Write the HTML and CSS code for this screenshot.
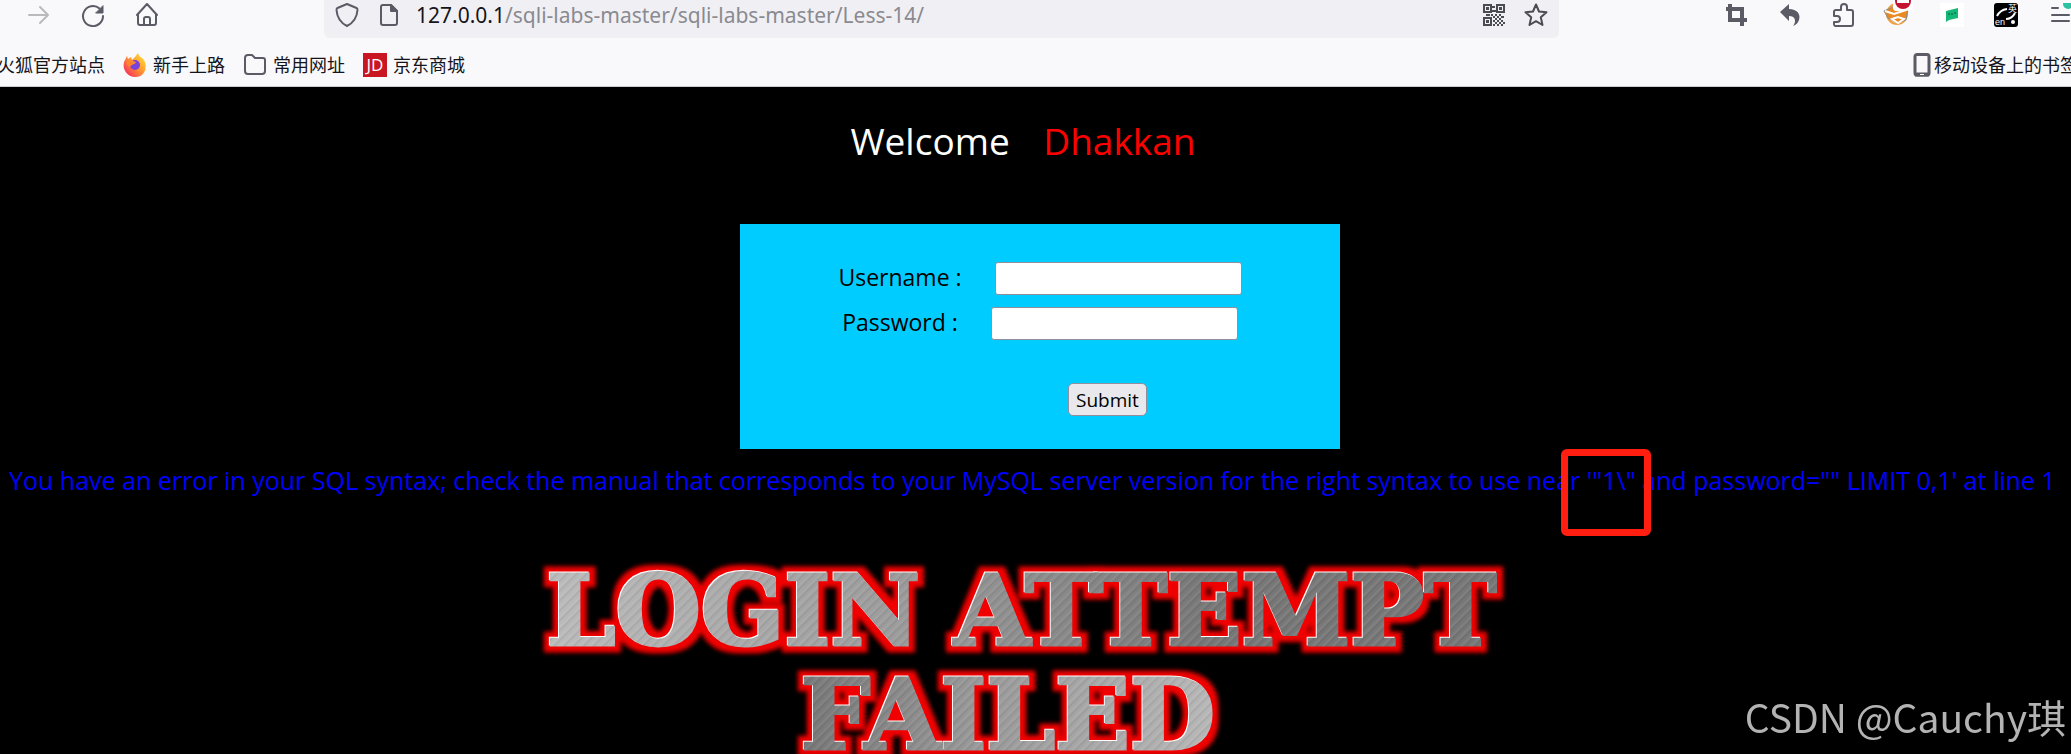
FILE: index.html
```html
<!DOCTYPE html>
<html lang="zh-CN">
<head>
    <meta charset="UTF-8">
    <meta name="viewport" content="width=device-width, initial-scale=1.0">
    <title>Less-14</title>
    <link rel="stylesheet" href="styles.css">
</head>
<body>
    <header class="browser">
        <div class="toolbar">
            <div class="nav-buttons">
                <button class="icon-button" aria-label="Forward" disabled>
                    <svg width="24" height="24" viewBox="0 0 24 24" fill="none" stroke="#b9b9be" stroke-width="2" stroke-linecap="round" stroke-linejoin="round"><path d="M2 12h19M13 4l8 8-8 8"/></svg>
                </button>
                <button class="icon-button" aria-label="Reload">
                    <svg width="24" height="24" viewBox="0 0 24 24" fill="none" stroke="#5b5b66" stroke-width="2" stroke-linecap="round"><path d="M18.500 5.500A10 10 0 1 0 22 13"/><path d="M22 3v7h-7z" fill="#5b5b66" stroke-width="1" stroke-linejoin="round"/></svg>
                </button>
                <button class="icon-button" aria-label="Home">
                    <svg width="24" height="24" viewBox="0 0 24 24" fill="none" stroke="#5b5b66" stroke-width="2" stroke-linecap="round" stroke-linejoin="round"><path d="M2 12 12 1l10 11M3 11v9a2 2 0 0 0 2 2h14a2 2 0 0 0 2-2v-9M9 22v-6a2 2 0 0 1 2-2h2a2 2 0 0 1 2 2v6"/></svg>
                </button>
            </div>

            <div class="url-bar">
                <svg width="24" height="24" viewBox="0 0 24 24" fill="none" stroke="#5b5b66" stroke-width="2" stroke-linejoin="round"><path d="M12 1 21.500 5c1 .4 1 1 1 2-.5 7-3.500 12.500-10.500 16C5 19.500 2 14 1.500 7c0-1 0-1.600 1-2z"/></svg>
                <svg class="page-icon" width="20" height="24" viewBox="0 0 20 24" fill="none" stroke="#5b5b66" stroke-width="2" stroke-linejoin="round"><path d="M4 2h8l6 6v12a2 2 0 0 1-2 2H4a2 2 0 0 1-2-2V4a2 2 0 0 1 2-2z"/><path d="M12 2v6h6z" fill="#5b5b66"/></svg>
                <span class="url"><span class="host">127.0.0.1</span>/sqli-labs-master/sqli-labs-master/Less-14/</span>
                <svg width="22" height="22" viewBox="0 0 22 22" fill="none" stroke="#4b4b52" stroke-width="2"><path d="M1 1h7v7H1zM14 1h7v7h-7zM1 14h7v7H1z"/><path d="M3 4.500h3M16 4.500h3M3 17.500h3" stroke-width="3"/><path d="M9 3h3M9 7h4M3 11h4M8 11h2M12 11h2M16 11h2M10 13h2M14 13h2M18 13h3M12 15h2M16 15h2M10 17h2M14 17h2M18 17h2M12 19h2M16 19h2M20 19h2M10 21h2M14 21h2M18 21h2"/></svg>
                <svg class="star-icon" width="24" height="24" viewBox="0 0 24 24" fill="none" stroke="#4b4b52" stroke-width="2" stroke-linejoin="round"><path d="M12 1.500 15 8.500l7.500.7-5.700 5.100 1.700 7.700L12 18.200 5.500 22l1.700-7.700L1.500 9.200 9 8.500z"/></svg>
            </div>

            <div class="extensions">
                <button class="icon-button" aria-label="Screenshot">
                    <svg width="24" height="24" viewBox="0 0 24 24" fill="none" stroke="#5b5b66" stroke-width="4"><path d="M2 6h16v17M6 1v16h17"/></svg>
                </button>
                <button class="icon-button" aria-label="Undo">
                    <svg width="24" height="24" viewBox="0 0 24 24" fill="#5b5b66"><path d="M2 9 11 1v5c8 0 12 5 10 11-1 3-3 5-6 6 4-5 2-10-4-10v5z"/></svg>
                </button>
                <button class="icon-button" aria-label="Extensions">
                    <svg width="24" height="26" viewBox="0 0 24 26" fill="none" stroke="#5b5b66" stroke-width="2" stroke-linejoin="round"><path d="M3 24h16a2 2 0 0 0 2-2V10a2 2 0 0 0-2-2h-4V5a3 3 0 0 0-6 0v3H4a2 2 0 0 0-2 2v4h3a3 3 0 0 1 0 6H2v2a2 2 0 0 0 1 2z"/></svg>
                </button>
                <button class="icon-button proxy" aria-label="Proxy switcher">
                    <svg width="30" height="26" viewBox="0 0 30 26" overflow="visible"><circle cx="14" cy="12" r="10" fill="#ffd9a0" stroke="#f0a040" stroke-width="2"/><path d="M1 9l9-4 15 2-2 11-9 3-9-5z" fill="#e98a22" stroke="#8b8b8b"/><path d="M2 9l9 3 12-4M9 17l6-2 6 2-6 4z" fill="none" stroke="#fff" stroke-width="2"/><path d="M10-2h20V8l-8 1H12l-2-2z" fill="#fff"/><circle cx="20" cy="-1" r="8" fill="#c4142f"/><path d="M14-2h12v3H14z" fill="#fff"/></svg>
                </button>
                <button class="icon-button" aria-label="Chat">
                    <svg width="24" height="24" viewBox="0 0 24 24"><path d="M0 0h24v24H0z" fill="#fff"/><path d="M6 8l12-3v10L9 17l-3 2z" fill="#13b877"/><path d="M9 10v2M12 10v2M15 9v2" stroke="#075c40" stroke-width="1"/></svg>
                </button>
                <button class="icon-button" aria-label="Translate">
                    <svg width="24" height="24" viewBox="0 0 24 24"><rect width="24" height="24" rx="3"/><text class="translate-glyph" x="14" y="9">英</text><text class="translate-glyph" x="1" y="22">en</text><path d="M3 13q3-6 10-7M12 16q6 0 9-6" fill="none" stroke="#fff" stroke-width="2"/><circle cx="19" cy="19" r="2" fill="#fff"/></svg>
                </button>
                <button class="icon-button" aria-label="Menu">
                    <svg width="24" height="24" viewBox="0 0 24 24" fill="none" stroke="#5b5b66" stroke-width="2" stroke-linecap="round"><path d="M4 5h6M4 12h17M4 18h17"/><circle cx="20" cy="1" r="5" fill="#2ac3a2" stroke="none"/></svg>
                </button>
            </div>
        </div>

        <nav class="bookmarks">
            <a href="#">火狐官方站点</a>
            <a href="#">
                <svg width="24" height="24" viewBox="0 0 24 24"><defs><linearGradient id="fox" x1="1" y1="0" x2="0" y2="1"><stop offset="0" stop-color="#fff044"/><stop offset=".45" stop-color="#ff9a2b"/><stop offset="1" stop-color="#f5156c"/></linearGradient></defs><path d="M15 0c1 4 4 4 6 7 4 7 1 17-9 17C3 24-2 14 2 7l2-4 1 3 3-2 1 3c2-2 4-4 6-7z" fill="url(#fox)"/><circle cx="12" cy="12" r="5" fill="#7743d9"/><path d="M4 8c4-2 6 0 9 1-1 3-5 2-6 5-3-1-4-4-3-6z" fill="#ff842c"/></svg>
                新手上路
            </a>
            <a href="#">
                <svg width="24" height="24" viewBox="0 0 24 24" fill="none" stroke="#5b5b66" stroke-width="2" stroke-linejoin="round"><path d="M2 5a3 3 0 0 1 3-3h4l3 3h8a2 2 0 0 1 2 2v11a3 3 0 0 1-3 3H5a3 3 0 0 1-3-3z"/></svg>
                常用网址
            </a>
            <a href="#"><span class="jd">JD</span>京东商城</a>
            <a href="#" class="mobile">
                <svg width="18" height="24" viewBox="0 0 18 24" fill="none" stroke="#5b5b66"><path d="M4 1.500h10a2 2 0 0 1 2 2V20a2 2 0 0 1-2 2H4a2 2 0 0 1-2-2V3.500a2 2 0 0 1 2-2z" stroke-width="3"/><path d="M2 21.500h14" stroke-width="4"/><path d="M7 21.500h4" stroke="#fff" stroke-width="1"/></svg>
                移动设备上的书签
            </a>
        </nav>
    </header>

    <main class="page">
        <h1 class="welcome">Welcome <span class="name">Dhakkan</span></h1>

        <form class="login-form">
            <div class="form-group">
                <label for="uname">Username :</label>
                <input type="text" id="uname" name="uname">
            </div>
            <div class="form-group">
                <label for="passwd">Password :</label>
                <input type="password" id="passwd" name="passwd">
            </div>
            <button type="submit" class="submit-button">Submit</button>
        </form>

        <p class="error">You have an error in your SQL syntax; check the manual that corresponds to your MySQL server version for the right syntax to use near <span class="marked">'"1\"</span> and password="" LIMIT 0,1' at line 1</p>

        <h2 class="failed"><span class="failed-line first">LOGIN ATTEMPT</span><span class="failed-line second">FAILED</span></h2>
    </main>

    <div class="watermark">CSDN @Cauchy琪</div>

    <svg class="filters" width="0" height="0" aria-hidden="true">
        <filter id="glow" x="-10%" y="-20%" width="120%" height="140%" color-interpolation-filters="sRGB">
            <feMorphology in="SourceAlpha" operator="dilate" radius="6" result="wide"/>
            <feGaussianBlur in="wide" stdDeviation="2" result="soft"/>
            <feFlood flood-color="#f00000"/>
            <feComposite in2="soft" operator="in" result="red"/>
            <feOffset in="SourceAlpha" dx="-1" dy="-1" result="edge"/>
            <feFlood flood-color="#ffffff"/>
            <feComposite in2="edge" operator="in" result="white"/>
            <feMerge>
                <feMergeNode in="red"/>
                <feMergeNode in="white"/>
                <feMergeNode in="SourceGraphic"/>
            </feMerge>
        </filter>
    </svg>
</body>
</html>
```
FILE: styles.css
```css
* {
    margin: 0;
    padding: 0;
    box-sizing: border-box;
}

:root {
    --chrome-color: #f9f9fb;
    --field-color: #f0f0f4;
    --form-color: #00ccff;
}

body {
    height: 100vh;
    overflow: hidden;
    background-color: #000;
    font-family: "Open Sans", "Noto Sans CJK SC", sans-serif;
}

svg {
    display: block;
    flex-shrink: 0;
}

.browser {
    background-color: var(--chrome-color);
    border-bottom: 1px solid #ccccd0;
}

.toolbar {
    display: flex;
    height: 38px;
}

.nav-buttons {
    display: flex;
    gap: 30px;
    width: 324px;
    padding: 0 0 8px 27px;
}

.icon-button {
    display: flex;
    align-items: center;
    border: none;
    background: none;
}

.url-bar {
    flex: 1;
    display: flex;
    align-items: center;
    padding: 0 11px 8px;
    background-color: var(--field-color);
    border-radius: 0 0 6px 6px;
}

.page-icon {
    margin-left: 20px;
}

.url {
    flex: 1;
    padding-left: 17px;
    color: #8a8a90;
    font-family: "Noto Sans", sans-serif;
    font-size: 21px;
    line-height: 30px;
    white-space: nowrap;
}

.host {
    color: #15141a;
}

.star-icon {
    margin-left: 19px;
}

.extensions {
    display: flex;
    gap: 30px;
    width: 512px;
    padding: 0 0 8px 165px;
}

.proxy {
    margin: 0 -3px;
}

.translate-glyph {
    fill: #fff;
    font-size: 9px;
}

.bookmarks {
    display: flex;
    align-items: center;
    gap: 18px;
    height: 48px;
    padding-top: 6px;
    margin-left: -3px;
}

.bookmarks a {
    display: flex;
    align-items: center;
    gap: 6px;
    flex-shrink: 0;
    color: #15141a;
    font-size: 18px;
    line-height: 24px;
    text-decoration: none;
}

.bookmarks .mobile {
    gap: 3px;
    margin-left: auto;
    margin-right: -7px;
}

.jd {
    width: 24px;
    background-color: #c81623;
    color: #fff;
    font-size: 17px;
    text-align: center;
}

.page {
    padding: 24px 0 0 9px;
}

.welcome {
    margin-right: 34px;
    color: #fff;
    font-size: 37px;
    font-weight: 400;
    line-height: 60px;
    text-align: center;
}

.name {
    margin-left: 24px;
    color: #f00;
}

.login-form {
    width: 600px;
    margin: 53px auto 0;
    padding: 38px 0 33px;
    background-color: var(--form-color);
}

.form-group {
    display: flex;
    justify-content: center;
    align-items: center;
    gap: 33px;
    margin-bottom: 12px;
    font-size: 23px;
    line-height: 33px;
}

.form-group label {
    padding-bottom: 2px;
    line-height: 31px;
}

.form-group input {
    width: 247px;
    height: 33px;
    padding: 0 4px;
    border: 1px solid #8f8f9d;
    border-radius: 3px;
    background-color: #fff;
    font-size: 20px;
}

.submit-button {
    display: block;
    height: 33px;
    margin: 43px 0 0 328px;
    padding: 0 7px;
    border: 1px solid #8f8f9d;
    border-radius: 5px;
    background-color: #e9e9ed;
    color: #000;
    font-family: inherit;
    font-size: 19px;
}

.error {
    margin-top: 14px;
    color: #00f;
    font-size: 25px;
    line-height: 34px;
    white-space: nowrap;
}

.marked {
    position: relative;
}

/* red frame round the broken quote */
.marked::after {
    content: '';
    box-sizing: border-box;
    position: absolute;
    top: -14px;
    left: -26px;
    right: -15px;
    height: 87px;
    border: 7px solid #ff1e10;
    border-radius: 6px;
}

.failed {
    margin-top: 62px;
    padding-right: 36px;
    font-family: "DejaVu Serif", serif;
    font-size: 98px;
    line-height: 104px;
    text-align: center;
    white-space: nowrap;
    filter: url(#glow);
}

.failed-line {
    display: block;
    width: fit-content;
    margin: 0 auto;
    background-clip: text;
    -webkit-background-clip: text;
    color: transparent;
    -webkit-text-stroke: 3px transparent;
}

.first {
    background-image: repeating-linear-gradient(135deg, rgba(255,255,255,0.06) 0 2px, rgba(0,0,0,0.05) 3px 4px, transparent 5px 7px), linear-gradient(90deg, #bbb, #999 40%, #777 70%, #777);
}

.second {
    padding-right: 28px;
    background-image: repeating-linear-gradient(135deg, rgba(255,255,255,0.06) 0 2px, rgba(0,0,0,0.05) 3px 4px, transparent 5px 7px), linear-gradient(90deg, #777, #999 40%, #bbb);
}

.watermark {
    position: fixed;
    right: 5px;
    bottom: 9px;
    color: #b3b3b3;
    font-family: "Noto Sans CJK SC", sans-serif;
    font-size: 39px;
    line-height: 58px;
}

.filters {
    position: absolute;
}
```
